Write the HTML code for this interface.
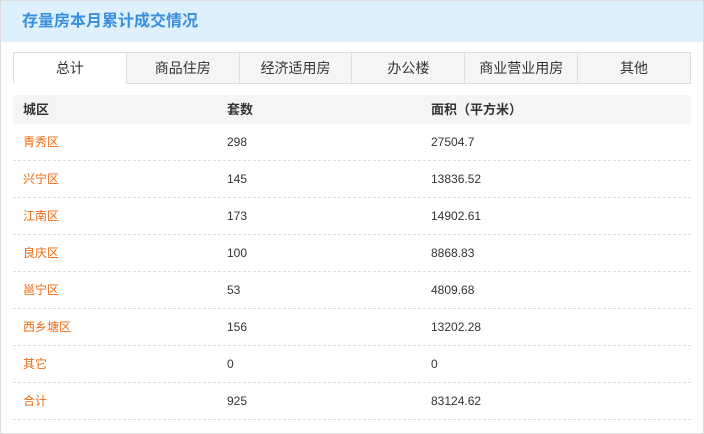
<!DOCTYPE html><html><head><meta charset="utf-8"><style>
body{margin:0;width:704px;height:434px;background:#fff;font-family:"Liberation Sans","Noto Sans CJK SC",sans-serif;font-size:12px;color:#333;overflow:hidden}
.box{position:absolute;left:0;top:0;width:702px;height:432px;border:1px solid #ddd}
.hd{height:41px;background:#ddf0fb;color:#3a8ee0;font-weight:bold;font-size:16px;line-height:41px;padding-left:21px}
.tabs{position:absolute;left:12px;top:51px;width:678px;height:32px;display:flex}
.tabs div{flex:1;height:30px;line-height:30px;text-align:center;font-size:14px;background:#f5f5f5;border:1px solid #ddd;border-left:none;color:#333}
.tabs div:first-child{background:#fff;border-left:1px solid #ddd;border-bottom-color:#fff}
.tb{position:absolute;left:12px;top:94px;width:678px}
.r{display:flex;height:36px;line-height:36px;border-bottom:1px dashed #ddd}
.r span{width:204px;padding-left:10px;box-sizing:border-box;overflow:hidden}
.r span:first-child{color:#f06a0f}
.h{height:29px;line-height:29px;background:#f5f5f5;border-bottom:none;font-weight:bold;font-size:13px}
.h span:first-child{color:#333}
</style></head><body><div class="box">
<div class="hd">存量房本月累计成交情况</div>
<div class="tabs"><div>总计</div><div>商品住房</div><div>经济适用房</div><div>办公楼</div><div>商业营业用房</div><div>其他</div></div>
<div class="tb">
<div class="r h"><span>城区</span><span>套数</span><span>面积（平方米）</span></div>
<div class="r"><span>青秀区</span><span>298</span><span>27504.7</span></div>
<div class="r"><span>兴宁区</span><span>145</span><span>13836.52</span></div>
<div class="r"><span>江南区</span><span>173</span><span>14902.61</span></div>
<div class="r"><span>良庆区</span><span>100</span><span>8868.83</span></div>
<div class="r"><span>邕宁区</span><span>53</span><span>4809.68</span></div>
<div class="r"><span>西乡塘区</span><span>156</span><span>13202.28</span></div>
<div class="r"><span>其它</span><span>0</span><span>0</span></div>
<div class="r"><span>合计</span><span>925</span><span>83124.62</span></div>
</div></div></body></html>
